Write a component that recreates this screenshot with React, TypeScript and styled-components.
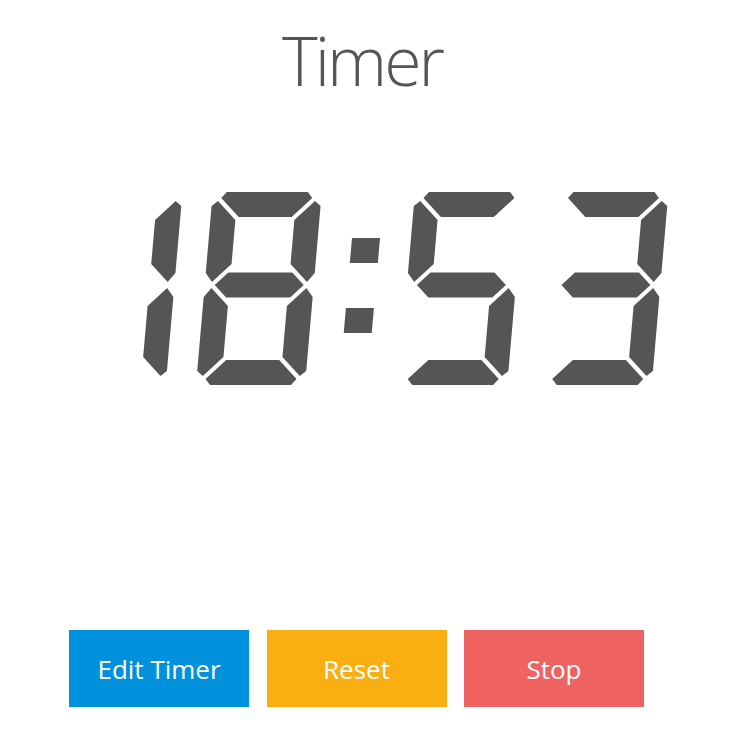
import styled, { createGlobalStyle } from 'styled-components';

const GlobalStyle = createGlobalStyle`
  body {
    margin: 0;
    background: #ffffff;
    font-family: 'Open Sans', 'Liberation Sans', sans-serif;
  }
`;

// seven segment geometry, unskewed, in px
const W = 109;
const H = 193;
const SKEW = 0.087;
const TOP = 192;

type Pt = [number, number];

const flipX = (pts: Pt[]): Pt[] => pts.map(([x, y]) => [W - x, y]);

const SEGMENTS: Record<string, Pt[]> = {
  a: [[14, 0], [W - 14, 0], [W - 9, 6], [W - 28, 25], [28, 25], [9, 6]],
  f: [[6, 9], [25, 28], [25, 72], [7, 90], [0, 81], [0, 14]],
  g: [[10, 93], [22.5, 80.5], [W - 22.5, 80.5], [W - 10, 93], [W - 22.5, 105.5], [22.5, 105.5]],
  e: [[0, 105], [7, 96], [25, 114], [25, H - 28], [6, H - 9], [0, H - 14]],
  d: [[14, H], [W - 14, H], [W - 9, H - 6], [W - 28, H - 25], [28, H - 25], [9, H - 6]],
};
SEGMENTS.b = flipX(SEGMENTS.f);
SEGMENTS.c = flipX(SEGMENTS.e);

const DIGIT_SEGMENTS: Record<string, string> = {
  '0': 'abcdef',
  '1': 'bc',
  '2': 'abged',
  '3': 'abgcd',
  '4': 'fgbc',
  '5': 'afgcd',
  '6': 'afgedc',
  '7': 'abc',
  '8': 'abcdefg',
  '9': 'abcdfg',
};

const toScreen = (x0: number, pts: Pt[]) =>
  pts.map(([x, y]) => `${(x0 + x - y * SKEW).toFixed(2)},${(TOP + y).toFixed(2)}`).join(' ');

const dot = (u1: number, u2: number, v1: number, v2: number): Pt[] => [
  [u1, v1],
  [u2, v1],
  [u2, v2],
  [u1, v2],
];

const digits = [
  { value: '1', x: 73.5 },
  { value: '8', x: 212.8 },
  { value: '5', x: 415 },
  { value: '3', x: 559.5 },
];

const buttons = [
  { label: 'Edit Timer', color: '#0091dd' },
  { label: 'Reset', color: '#f9ae11' },
  { label: 'Stop', color: '#ee6262' },
];

export default function App() {
  return (
    <Page>
      <GlobalStyle />
      <Title>Timer</Title>
      <Display viewBox="0 185 721 210" width="721" height="210">
        {digits.map((digit) =>
          DIGIT_SEGMENTS[digit.value].split('').map((seg) => (
            <polygon key={digit.x + seg} points={toScreen(digit.x, SEGMENTS[seg])} />
          ))
        )}
        <polygon points={toScreen(0, dot(356, 384, 46, 71))} />
        <polygon points={toScreen(0, dot(356, 384, 116, 141))} />
      </Display>
      <ButtonRow>
        {buttons.map((b) => (
          <ActionButton key={b.label} $color={b.color}>
            {b.label}
          </ActionButton>
        ))}
      </ButtonRow>
    </Page>
  );
}

const Page = styled.div`
  width: 721px;
  display: flex;
  flex-direction: column;
`;

const Title = styled.h1`
  margin: 13px 0 0;
  height: 93px;
  font-size: 68px;
  font-weight: 300;
  line-height: 93px;
  letter-spacing: -3px;
  text-indent: 3px;
  text-align: center;
  color: #555555;
`;

const Display = styled.svg`
  display: block;
  margin-top: 79px;
  fill: #555555;
`;

const ButtonRow = styled.div`
  display: flex;
  gap: 17.5px;
  padding-left: 69px;
  margin-top: 235px;
`;

const ActionButton = styled.button<{ $color: string }>`
  width: 180px;
  height: 77px;
  border: none;
  border-radius: 0;
  padding: 0;
  display: flex;
  align-items: center;
  justify-content: center;
  background-color: ${({ $color }) => $color};
  color: #ffffff;
  font-family: 'Open Sans', 'Liberation Sans', sans-serif;
  font-size: 26px;
  cursor: pointer;
`;
